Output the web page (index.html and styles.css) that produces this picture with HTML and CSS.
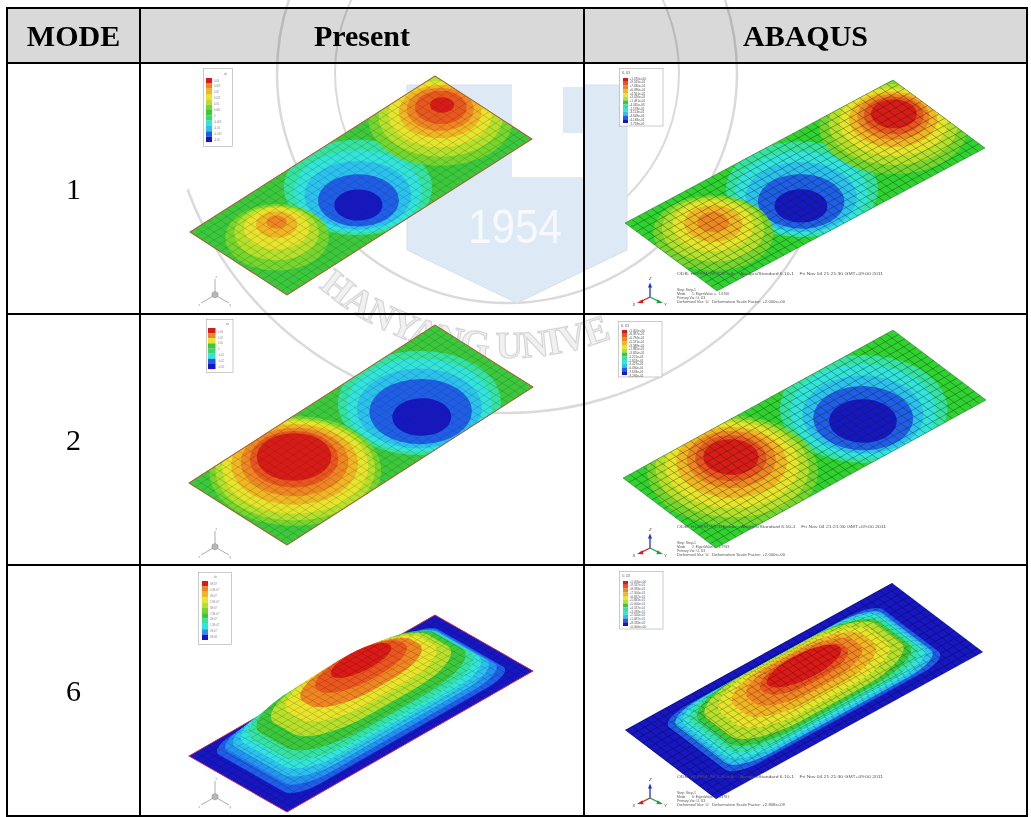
FILE: index.html
```html
<!DOCTYPE html>
<html lang="en">
<head>
<meta charset="utf-8">
<title>Mode shapes: Present vs ABAQUS</title>
<link rel="stylesheet" href="styles.css">
</head>
<body>
<div class="page">
  <div class="sheet">
    <div class="head">MODE</div>
    <div class="head">Present</div>
    <div class="head">ABAQUS</div>

    <!-- ===== MODE 1 ===== -->
    <div class="mode">1</div>
    <div class="plot">
      <svg class="fig" width="442" height="249" viewBox="141 64 442 249">
        <defs>
          <path id="mesh" d="M0 0v16m1-16v16m1-16v16m1-16v16m1-16v16m1-16v16m1-16v16m1-16v16m1-16v16m1-16v16m1-16v16m1-16v16m1-16v16m1-16v16m1-16v16m1-16v16m1-16v16m1-16v16m1-16v16m1-16v16m1-16v16m1-16v16m1-16v16m1-16v16m1-16v16m1-16v16m1-16v16m1-16v16m1-16v16m1-16v16m1-16v16m1-16v16m1-16v16m1-16v16m1-16v16m1-16v16m1-16v16m1-16v16m1-16v16m1-16v16m1-16v16M0 0h40m-40 1h40m-40 1h40m-40 1h40m-40 1h40m-40 1h40m-40 1h40m-40 1h40m-40 1h40m-40 1h40m-40 1h40m-40 1h40m-40 1h40m-40 1h40m-40 1h40m-40 1h40m-40 1h40"/>
          <clipPath id="plateClip"><rect width="40" height="16"/></clipPath>
          <pattern id="gridP" patternUnits="userSpaceOnUse" width="1" height="1"><path class="pat-p" d="M0 0H1M0 0V1"/></pattern>
          <pattern id="gridA" patternUnits="userSpaceOnUse" width="1" height="1"><path class="pat-a" d="M0 0H1M0 0V1"/></pattern>
        </defs>
        <g transform="matrix(6.125 -3.9 6.0625 3.9375 190 232)">
          <rect class="k7" width="40" height="16"/>
          <g clip-path="url(#plateClip)">
            <circle class="k5" cx="19.5" cy="8" r="8.6"/>
            <circle class="k4" cx="19" cy="8.5" r="7.4"/>
            <circle class="k3" cx="18.5" cy="9" r="6.2"/>
            <circle class="k1" cx="17.9" cy="9.7" r="4.7"/>
            <circle class="k0" cx="17.3" cy="10.3" r="2.8"/>
            <circle class="k8" cx="6.5" cy="7.8" r="6"/>
            <circle class="k9" cx="7" cy="7.2" r="4.9"/>
            <circle class="k10" cx="7.6" cy="6.6" r="3.8"/>
            <circle class="k11" cx="8.1" cy="6.1" r="2.4"/>
            <circle class="k12" cx="8.4" cy="5.8" r="1.2"/>
            <circle class="k8" cx="35" cy="6" r="8.4"/>
            <circle class="k9" cx="35.3" cy="5.7" r="7.2"/>
            <circle class="k10" cx="35.6" cy="5.3" r="6"/>
            <circle class="k11" cx="35.9" cy="5" r="4.8"/>
            <circle class="k12" cx="36.2" cy="4.7" r="3.9"/>
            <circle class="k13" cx="36.5" cy="4.5" r="3"/>
            <circle class="k14" cx="36.9" cy="4.3" r="1.4"/>
          </g>
          <use href="#mesh" class="mesh-p"/>
          <rect class="edge-p" width="40" height="16"/>
        </g>
        <g class="legend">
          <rect class="lg-box" x="203.5" y="68.5" width="29" height="78"/>
          <text class="lg-p" x="224" y="74.5">dz</text>
          <rect class="k14" x="206" y="78" width="6" height="5.4"/>
          <rect class="k12" x="206" y="83.33" width="6" height="5.4"/>
          <rect class="k11" x="206" y="88.67" width="6" height="5.4"/>
          <rect class="k10" x="206" y="94" width="6" height="5.4"/>
          <rect class="k9" x="206" y="99.33" width="6" height="5.4"/>
          <rect class="k8" x="206" y="104.67" width="6" height="5.4"/>
          <rect class="k7" x="206" y="110" width="6" height="5.4"/>
          <rect class="k6" x="206" y="115.33" width="6" height="5.4"/>
          <rect class="k4" x="206" y="120.67" width="6" height="5.4"/>
          <rect class="k3" x="206" y="126" width="6" height="5.4"/>
          <rect class="k1" x="206" y="131.33" width="6" height="5.4"/>
          <rect class="k0" x="206" y="136.67" width="6" height="5.4"/>
          <text class="lg-p" x="214" y="81.5">0.03</text>
          <text class="lg-p" x="214" y="87.45">0.025</text>
          <text class="lg-p" x="214" y="93.4">0.02</text>
          <text class="lg-p" x="214" y="99.35">0.015</text>
          <text class="lg-p" x="214" y="105.3">0.01</text>
          <text class="lg-p" x="214" y="111.25">0.005</text>
          <text class="lg-p" x="214" y="117.2">0</text>
          <text class="lg-p" x="214" y="123.15">-0.005</text>
          <text class="lg-p" x="214" y="129.1">-0.01</text>
          <text class="lg-p" x="214" y="135.05">-0.015</text>
          <text class="lg-p" x="214" y="141">-0.02</text>
        </g>
        <g class="triad-p">
          <path class="tp-line" d="M215 295V279M215 295L201 303M215 295L229 303"/>
          <path class="tp-cube" d="M212 293l3-1.5 3 1.5v3.5l-3 1.5-3-1.5z"/>
          <text class="tp-lbl" x="215.5" y="277.5">z</text>
          <text class="tp-lbl" x="198.5" y="306">x</text>
          <text class="tp-lbl" x="229.5" y="306">y</text>
        </g>
      </svg>
    </div>
    <div class="plot">
      <svg class="fig" width="441" height="249" viewBox="585 64 441 249">
        <g transform="matrix(6.7 -3.575 5.75 4.25 625 223)">
          <rect class="ka7" width="40" height="16"/>
          <g clip-path="url(#plateClip)">
            <circle class="k5" cx="19.3" cy="8.3" r="8.6"/>
            <circle class="k4" cx="18.8" cy="8.8" r="7.5"/>
            <circle class="k3" cx="18.3" cy="9.3" r="6.3"/>
            <circle class="k1" cx="17.8" cy="9.9" r="4.9"/>
            <circle class="k0" cx="17.25" cy="10.5" r="3"/>
            <circle class="k8" cx="6.5" cy="7.8" r="6.8"/>
            <circle class="k9" cx="6.9" cy="7.3" r="5.8"/>
            <circle class="k10" cx="7.3" cy="6.8" r="4.6"/>
            <circle class="k11" cx="7.6" cy="6.5" r="3.3"/>
            <circle class="k12" cx="7.75" cy="6.3" r="1.8"/>
            <circle class="k8" cx="34.5" cy="6.5" r="8.4"/>
            <circle class="k9" cx="34.8" cy="6.1" r="7.3"/>
            <circle class="k10" cx="35.1" cy="5.8" r="6.1"/>
            <circle class="k11" cx="35.4" cy="5.4" r="5"/>
            <circle class="k12" cx="35.7" cy="5.1" r="4.1"/>
            <circle class="k13" cx="35.9" cy="4.9" r="3.4"/>
            <circle class="k14" cx="36.1" cy="4.7" r="2.6"/>
          </g>
          <use href="#mesh" class="mesh-a"/>
        </g>
        <g class="legend">
          <rect class="lg-box" x="619.5" y="68.5" width="43.5" height="57.5"/>
          <text class="lg-a" x="622" y="73.5">U, U3</text>
          <rect class="k14" x="623" y="78" width="5" height="3.8"/>
          <rect class="k13" x="623" y="81.75" width="5" height="3.8"/>
          <rect class="k12" x="623" y="85.5" width="5" height="3.8"/>
          <rect class="k11" x="623" y="89.25" width="5" height="3.8"/>
          <rect class="k10" x="623" y="93" width="5" height="3.8"/>
          <rect class="k9" x="623" y="96.75" width="5" height="3.8"/>
          <rect class="k7" x="623" y="100.5" width="5" height="3.8"/>
          <rect class="k5" x="623" y="104.25" width="5" height="3.8"/>
          <rect class="k4" x="623" y="108" width="5" height="3.8"/>
          <rect class="k3" x="623" y="111.75" width="5" height="3.8"/>
          <rect class="k1" x="623" y="115.5" width="5" height="3.8"/>
          <rect class="k0" x="623" y="119.25" width="5" height="3.8"/>
          <text class="lg-a" x="629.5" y="79.6">+1.070e+00</text>
          <text class="lg-a" x="629.5" y="83.35">+9.165e-01</text>
          <text class="lg-a" x="629.5" y="87.1">+7.630e-01</text>
          <text class="lg-a" x="629.5" y="90.85">+6.096e-01</text>
          <text class="lg-a" x="629.5" y="94.6">+4.561e-01</text>
          <text class="lg-a" x="629.5" y="98.35">+3.026e-01</text>
          <text class="lg-a" x="629.5" y="102.1">+1.491e-01</text>
          <text class="lg-a" x="629.5" y="105.85">-4.345e-03</text>
          <text class="lg-a" x="629.5" y="109.6">-1.578e-01</text>
          <text class="lg-a" x="629.5" y="113.35">-3.113e-01</text>
          <text class="lg-a" x="629.5" y="117.1">-4.648e-01</text>
          <text class="lg-a" x="629.5" y="120.85">-6.183e-01</text>
          <text class="lg-a" x="629.5" y="124.6">-7.718e-01</text>
        </g>
        <g class="info">
          <text x="677" y="274.5" textLength="206" lengthAdjust="spacingAndGlyphs">ODB: HLFEM_MODE.odb    Abaqus/Standard 6.10-1    Fri Nov 04 21:21:30 GMT+09:00 2011</text>
          <text x="677" y="290.5">Step: Step-1</text>
          <text x="677" y="294.5">Mode       1: EigenValue =   1.6706</text>
          <text x="677" y="298.5">Primary Var: U, U3</text>
          <text x="677" y="302.5" textLength="108" lengthAdjust="spacingAndGlyphs">Deformed Var: U   Deformation Scale Factor: +2.000e+00</text>
        </g>
        <g class="triad-a">
          <path class="ta-z" d="M650 297V286"/><path class="ta-zh" d="M648 287.5L650 282.5L652 287.5Z"/>
          <path class="ta-x" d="M650 297L641 301.5"/><path class="ta-xh" d="M642.5 299.3L637 303L643.6 303.2Z"/>
          <path class="ta-y" d="M650 297L659 301.5"/><path class="ta-yh" d="M657.5 299.3L663 303L656.4 303.2Z"/>
          <text class="ta-lbl" x="649" y="280">Z</text>
          <text class="ta-lbl" x="632.5" y="305.5">X</text>
          <text class="ta-lbl" x="664" y="306">Y</text>
        </g>
      </svg>
    </div>

    <!-- ===== MODE 2 ===== -->
    <div class="mode">2</div>
    <div class="plot">
      <svg class="fig" width="442" height="249" viewBox="141 315 442 249">
        <g transform="matrix(6.15 -3.95 6.125 3.875 189 483)">
          <rect class="k7" width="40" height="16"/>
          <g clip-path="url(#plateClip)">
            <circle class="k5" cx="28.8" cy="8.7" r="9.4"/>
            <circle class="k4" cx="28.5" cy="9" r="8.4"/>
            <circle class="k3" cx="28.1" cy="9.4" r="7.2"/>
            <circle class="k1" cx="27.8" cy="9.9" r="5.9"/>
            <circle class="k0" cx="27.2" cy="10.7" r="3.4"/>
            <circle class="k8" cx="10.1" cy="7.2" r="9.9"/>
            <circle class="k9" cx="10.3" cy="7" r="9.2"/>
            <circle class="k10" cx="10.6" cy="6.7" r="8.4"/>
            <circle class="k11" cx="10.9" cy="6.3" r="7.3"/>
            <circle class="k12" cx="11.2" cy="6" r="6.2"/>
            <circle class="k13" cx="11.5" cy="5.6" r="5.1"/>
            <circle class="k14" cx="11.8" cy="5.3" r="4.3"/>
          </g>
          <use href="#mesh" class="mesh-p"/>
          <rect class="edge-p" width="40" height="16"/>
        </g>
        <g class="legend">
          <rect class="lg-box" x="206.5" y="319.5" width="26.5" height="53"/>
          <text class="lg-p" x="226" y="325">dz</text>
          <rect class="k14" x="208" y="328" width="7.5" height="5.2"/>
          <rect class="k12" x="208" y="333.13" width="7.5" height="5.2"/>
          <rect class="k10" x="208" y="338.25" width="7.5" height="5.2"/>
          <rect class="k7" x="208" y="343.38" width="7.5" height="5.2"/>
          <rect class="k6" x="208" y="348.5" width="7.5" height="5.2"/>
          <rect class="k4" x="208" y="353.63" width="7.5" height="5.2"/>
          <rect class="k1" x="208" y="358.75" width="7.5" height="5.2"/>
          <rect class="k0" x="208" y="363.88" width="7.5" height="5.2"/>
          <text class="lg-p" x="218" y="332.6">0.03</text>
          <text class="lg-p" x="218" y="338.5">0.02</text>
          <text class="lg-p" x="218" y="344.4">0.01</text>
          <text class="lg-p" x="218" y="350.4">0</text>
          <text class="lg-p" x="218" y="356.3">-0.01</text>
          <text class="lg-p" x="218" y="362.2">-0.02</text>
          <text class="lg-p" x="218" y="368.2">-0.03</text>
        </g>
        <g class="triad-p" transform="translate(0 252)">
          <path class="tp-line" d="M215 295V279M215 295L201 303M215 295L229 303"/>
          <path class="tp-cube" d="M212 293l3-1.5 3 1.5v3.5l-3 1.5-3-1.5z"/>
          <text class="tp-lbl" x="215.5" y="277.5">z</text>
          <text class="tp-lbl" x="198.5" y="306">x</text>
          <text class="tp-lbl" x="229.5" y="306">y</text>
        </g>
      </svg>
    </div>
    <div class="plot">
      <svg class="fig" width="441" height="249" viewBox="585 315 441 249">
        <g transform="matrix(6.75 -3.7 5.8125 4.375 623 478)">
          <rect class="ka7" width="40" height="16"/>
          <g clip-path="url(#plateClip)">
            <circle class="k5" cx="28.5" cy="8.3" r="9.4"/>
            <circle class="k4" cx="28.2" cy="8.6" r="8.2"/>
            <circle class="k3" cx="27.8" cy="9" r="6.8"/>
            <circle class="k1" cx="27.4" cy="9.5" r="5.6"/>
            <circle class="k0" cx="27.06" cy="9.86" r="3.8"/>
            <circle class="k8" cx="10.2" cy="7" r="9.6"/>
            <circle class="k9" cx="10.5" cy="6.6" r="8.6"/>
            <circle class="k10" cx="10.8" cy="6.2" r="7.5"/>
            <circle class="k11" cx="11.1" cy="5.8" r="6.2"/>
            <circle class="k12" cx="11.4" cy="5.4" r="5"/>
            <circle class="k13" cx="11.5" cy="5.2" r="4"/>
            <circle class="k14" cx="11.65" cy="5.05" r="3.1"/>
          </g>
          <use href="#mesh" class="mesh-a"/>
        </g>
        <g class="legend" transform="translate(-1 253)">
          <rect class="lg-box" x="619.5" y="68.5" width="43.5" height="55.5"/>
          <text class="lg-a" x="622" y="73.5">U, U3</text>
          <rect class="k14" x="623" y="77" width="5" height="3.8"/>
          <rect class="k13" x="623" y="80.75" width="5" height="3.8"/>
          <rect class="k12" x="623" y="84.5" width="5" height="3.8"/>
          <rect class="k11" x="623" y="88.25" width="5" height="3.8"/>
          <rect class="k10" x="623" y="92" width="5" height="3.8"/>
          <rect class="k9" x="623" y="95.75" width="5" height="3.8"/>
          <rect class="k7" x="623" y="99.5" width="5" height="3.8"/>
          <rect class="k5" x="623" y="103.25" width="5" height="3.8"/>
          <rect class="k4" x="623" y="107" width="5" height="3.8"/>
          <rect class="k3" x="623" y="110.75" width="5" height="3.8"/>
          <rect class="k1" x="623" y="114.5" width="5" height="3.8"/>
          <rect class="k0" x="623" y="118.25" width="5" height="3.8"/>
          <text class="lg-a" x="629.5" y="78.6">+1.000e+00</text>
          <text class="lg-a" x="629.5" y="82.35">+8.397e-01</text>
          <text class="lg-a" x="629.5" y="86.1">+6.794e-01</text>
          <text class="lg-a" x="629.5" y="89.85">+5.191e-01</text>
          <text class="lg-a" x="629.5" y="93.6">+3.588e-01</text>
          <text class="lg-a" x="629.5" y="97.35">+1.985e-01</text>
          <text class="lg-a" x="629.5" y="101.1">+3.820e-02</text>
          <text class="lg-a" x="629.5" y="104.85">-1.221e-01</text>
          <text class="lg-a" x="629.5" y="108.6">-2.824e-01</text>
          <text class="lg-a" x="629.5" y="112.35">-4.427e-01</text>
          <text class="lg-a" x="629.5" y="116.1">-6.030e-01</text>
          <text class="lg-a" x="629.5" y="119.85">-7.633e-01</text>
          <text class="lg-a" x="629.5" y="123.6">-9.236e-01</text>
        </g>
        <g class="info" transform="translate(0 253)">
          <text x="677" y="274.5" textLength="209" lengthAdjust="spacingAndGlyphs">ODB: HLFEM_MODE.odb    Abaqus/Standard 6.10-1    Fri Nov 04 21:21:30 GMT+09:00 2011</text>
          <text x="677" y="290.5">Step: Step-1</text>
          <text x="677" y="294.5">Mode       2: EigenValue =   1.7933</text>
          <text x="677" y="298.5">Primary Var: U, U3</text>
          <text x="677" y="302.5" textLength="108" lengthAdjust="spacingAndGlyphs">Deformed Var: U   Deformation Scale Factor: +2.000e+00</text>
        </g>
        <g class="triad-a" transform="translate(0 251)">
          <path class="ta-z" d="M650 297V286"/><path class="ta-zh" d="M648 287.5L650 282.5L652 287.5Z"/>
          <path class="ta-x" d="M650 297L641 301.5"/><path class="ta-xh" d="M642.5 299.3L637 303L643.6 303.2Z"/>
          <path class="ta-y" d="M650 297L659 301.5"/><path class="ta-yh" d="M657.5 299.3L663 303L656.4 303.2Z"/>
          <text class="ta-lbl" x="649" y="280">Z</text>
          <text class="ta-lbl" x="632.5" y="305.5">X</text>
          <text class="ta-lbl" x="664" y="306">Y</text>
        </g>
      </svg>
    </div>

    <!-- ===== MODE 6 ===== -->
    <div class="mode">6</div>
    <div class="plot">
      <svg class="fig" width="442" height="249" viewBox="141 566 442 249">
        <g transform="matrix(6.15 -3.525 6.125 3.5 189 756)">
          <rect class="k0" width="40" height="16"/>
          <rect class="gp" width="40" height="16"/>
          <rect class="edge-m" width="40" height="16"/>
        </g>
        <g transform="translate(0 -3) matrix(6.15 -3.525 6.125 3.5 189 756)"><rect class="k1" x="2.2" y=".9" width="35.6" height="14.2" rx="4.45" ry="1.78"/><rect class="gp" x="2.2" y=".9" width="35.6" height="14.2" rx="4.45" ry="1.78"/></g>
        <g transform="translate(0 -6.5) matrix(6.15 -3.525 6.125 3.5 189 756)"><rect class="k2" x="2.9" y="1.2" width="34.2" height="13.6" rx="5.56" ry="2.21"/><rect class="gp" x="2.9" y="1.2" width="34.2" height="13.6" rx="5.56" ry="2.21"/></g>
        <g transform="translate(0 -10) matrix(6.15 -3.525 6.125 3.5 189 756)"><rect class="k3" x="3.6" y="1.45" width="32.8" height="13.1" rx="6.56" ry="2.62"/><rect class="gp" x="3.6" y="1.45" width="32.8" height="13.1" rx="6.56" ry="2.62"/></g>
        <g transform="translate(0 -14) matrix(6.15 -3.525 6.125 3.5 189 756)"><rect class="k4" x="4.3" y="1.7" width="31.4" height="12.6" rx="7.46" ry="2.99"/><rect class="gp" x="4.3" y="1.7" width="31.4" height="12.6" rx="7.46" ry="2.99"/></g>
        <g transform="translate(0 -18) matrix(6.15 -3.525 6.125 3.5 189 756)"><rect class="k5" x="5" y="2" width="30" height="12" rx="8.25" ry="3.3"/><rect class="gp" x="5" y="2" width="30" height="12" rx="8.25" ry="3.3"/></g>
        <g transform="translate(0 -23) matrix(6.15 -3.525 6.125 3.5 189 756)"><rect class="k7" x="5.8" y="2.3" width="28.4" height="11.4" rx="8.88" ry="3.56"/><rect class="gp" x="5.8" y="2.3" width="28.4" height="11.4" rx="8.88" ry="3.56"/></g>
        <g transform="translate(0 -29) matrix(6.15 -3.525 6.125 3.5 189 756)"><rect class="k9" x="7.5" y="3" width="25" height="10" rx="8.75" ry="3.5"/><rect class="gp" x="7.5" y="3" width="25" height="10" rx="8.75" ry="3.5"/></g>
        <g transform="translate(0 -35) matrix(6.15 -3.525 6.125 3.5 189 756)"><rect class="k10" x="9.3" y="3.7" width="21.4" height="8.6" rx="8.29" ry="3.33"/><rect class="gp" x="9.3" y="3.7" width="21.4" height="8.6" rx="8.29" ry="3.33"/></g>
        <g transform="translate(0 -41) matrix(6.15 -3.525 6.125 3.5 189 756)"><rect class="k12" x="11.2" y="4.5" width="17.6" height="7" rx="7.48" ry="2.98"/><rect class="gp" x="11.2" y="4.5" width="17.6" height="7" rx="7.48" ry="2.98"/></g>
        <g transform="translate(0 -47) matrix(6.15 -3.525 6.125 3.5 189 756)"><rect class="k13" x="13.2" y="5.3" width="13.6" height="5.4" rx="6.29" ry="2.5"/><rect class="gp" x="13.2" y="5.3" width="13.6" height="5.4" rx="6.29" ry="2.5"/></g>
        <g transform="translate(0 -53) matrix(6.15 -3.525 6.125 3.5 189 756)"><ellipse class="k14" cx="20" cy="8" rx="4.6" ry="1.8"/><ellipse class="gp" cx="20" cy="8" rx="4.6" ry="1.8"/></g>
        <g class="legend">
          <rect class="lg-box" x="198.5" y="572.5" width="33" height="72"/>
          <text class="lg-p" x="214" y="577.5">dz</text>
          <rect class="k14" x="202" y="581" width="6" height="5.4"/>
          <rect class="k12" x="202" y="586.36" width="6" height="5.4"/>
          <rect class="k11" x="202" y="591.72" width="6" height="5.4"/>
          <rect class="k10" x="202" y="597.08" width="6" height="5.4"/>
          <rect class="k9" x="202" y="602.44" width="6" height="5.4"/>
          <rect class="k8" x="202" y="607.8" width="6" height="5.4"/>
          <rect class="k7" x="202" y="613.16" width="6" height="5.4"/>
          <rect class="k5" x="202" y="618.52" width="6" height="5.4"/>
          <rect class="k4" x="202" y="623.88" width="6" height="5.4"/>
          <rect class="k2" x="202" y="629.24" width="6" height="5.4"/>
          <rect class="k0" x="202" y="634.6" width="6" height="5.4"/>
          <text class="lg-p" x="210" y="585">5E-07</text>
          <text class="lg-p" x="210" y="590.9">4.5E-07</text>
          <text class="lg-p" x="210" y="596.8">4E-07</text>
          <text class="lg-p" x="210" y="602.7">3.5E-07</text>
          <text class="lg-p" x="210" y="608.6">3E-07</text>
          <text class="lg-p" x="210" y="614.5">2.5E-07</text>
          <text class="lg-p" x="210" y="620.4">2E-07</text>
          <text class="lg-p" x="210" y="626.3">1.5E-07</text>
          <text class="lg-p" x="210" y="632.2">1E-07</text>
          <text class="lg-p" x="210" y="638.1">5E-08</text>
        </g>
        <g class="triad-p" transform="translate(0 502)">
          <path class="tp-line" d="M215 295V279M215 295L201 303M215 295L229 303"/>
          <path class="tp-cube" d="M212 293l3-1.5 3 1.5v3.5l-3 1.5-3-1.5z"/>
          <text class="tp-lbl" x="215.5" y="277.5">z</text>
          <text class="tp-lbl" x="198.5" y="306">x</text>
          <text class="tp-lbl" x="229.5" y="306">y</text>
        </g>
      </svg>
    </div>
    <div class="plot">
      <svg class="fig" width="441" height="249" viewBox="585 566 441 249">
        <g transform="matrix(6.675 -3.675 5.6875 4.3125 625 730)">
          <rect class="k0" width="40" height="16"/>
          <rect class="ga" width="40" height="16"/>
        </g>
        <g transform="translate(0 -1.4) matrix(6.675 -3.675 5.6875 4.3125 625 730) translate(2 .64) scale(.9 .92)"><rect class="k1" x="2.2" y=".9" width="35.6" height="14.2" rx="4.45" ry="1.78"/><rect class="ga" x="2.2" y=".9" width="35.6" height="14.2" rx="4.45" ry="1.78"/></g>
        <g transform="translate(0 -3) matrix(6.675 -3.675 5.6875 4.3125 625 730) translate(2 .64) scale(.9 .92)"><rect class="k3" x="2.9" y="1.2" width="34.2" height="13.6" rx="5.56" ry="2.21"/><rect class="ga" x="2.9" y="1.2" width="34.2" height="13.6" rx="5.56" ry="2.21"/></g>
        <g transform="translate(0 -4.7) matrix(6.675 -3.675 5.6875 4.3125 625 730) translate(2 .64) scale(.9 .92)"><rect class="k4" x="3.6" y="1.45" width="32.8" height="13.1" rx="6.56" ry="2.62"/><rect class="ga" x="3.6" y="1.45" width="32.8" height="13.1" rx="6.56" ry="2.62"/></g>
        <g transform="translate(0 -6.6) matrix(6.675 -3.675 5.6875 4.3125 625 730) translate(2 .64) scale(.9 .92)"><rect class="k5" x="4.3" y="1.7" width="31.4" height="12.6" rx="7.46" ry="2.99"/><rect class="ga" x="4.3" y="1.7" width="31.4" height="12.6" rx="7.46" ry="2.99"/></g>
        <g transform="translate(0 -8.5) matrix(6.675 -3.675 5.6875 4.3125 625 730) translate(2 .64) scale(.9 .92)"><rect class="k7" x="5" y="2" width="30" height="12" rx="8.25" ry="3.3"/><rect class="ga" x="5" y="2" width="30" height="12" rx="8.25" ry="3.3"/></g>
        <g transform="translate(0 -10.8) matrix(6.675 -3.675 5.6875 4.3125 625 730) translate(2 .64) scale(.9 .92)"><rect class="k9" x="5.8" y="2.3" width="28.4" height="11.4" rx="8.88" ry="3.56"/><rect class="ga" x="5.8" y="2.3" width="28.4" height="11.4" rx="8.88" ry="3.56"/></g>
        <g transform="translate(0 -13.6) matrix(6.675 -3.675 5.6875 4.3125 625 730) translate(2 .64) scale(.9 .92)"><rect class="k10" x="7.5" y="3" width="25" height="10" rx="8.75" ry="3.5"/><rect class="ga" x="7.5" y="3" width="25" height="10" rx="8.75" ry="3.5"/></g>
        <g transform="translate(0 -16.5) matrix(6.675 -3.675 5.6875 4.3125 625 730) translate(2 .64) scale(.9 .92)"><rect class="k11" x="9.3" y="3.7" width="21.4" height="8.6" rx="8.29" ry="3.33"/><rect class="ga" x="9.3" y="3.7" width="21.4" height="8.6" rx="8.29" ry="3.33"/></g>
        <g transform="translate(0 -19.3) matrix(6.675 -3.675 5.6875 4.3125 625 730) translate(2 .64) scale(.9 .92)"><rect class="k12" x="11.2" y="4.5" width="17.6" height="7" rx="7.48" ry="2.98"/><rect class="ga" x="11.2" y="4.5" width="17.6" height="7" rx="7.48" ry="2.98"/></g>
        <g transform="translate(0 -22) matrix(6.675 -3.675 5.6875 4.3125 625 730) translate(2 .64) scale(.9 .92)"><rect class="k13" x="13.2" y="5.3" width="13.6" height="5.4" rx="6.29" ry="2.5"/><rect class="ga" x="13.2" y="5.3" width="13.6" height="5.4" rx="6.29" ry="2.5"/></g>
        <g transform="translate(0 -24.9) matrix(6.675 -3.675 5.6875 4.3125 625 730) translate(2 .64) scale(.9 .92)"><ellipse class="k14" cx="20" cy="8" rx="5.9" ry="2.2"/><ellipse class="ga" cx="20" cy="8" rx="5.9" ry="2.2"/></g>
        <g class="legend" transform="translate(0 503)">
          <rect class="lg-box" x="619.5" y="68.5" width="43.5" height="57.5"/>
          <text class="lg-a" x="622" y="73.5">U, U3</text>
          <rect class="k14" x="623" y="78" width="5" height="3.8"/>
          <rect class="k13" x="623" y="81.75" width="5" height="3.8"/>
          <rect class="k12" x="623" y="85.5" width="5" height="3.8"/>
          <rect class="k11" x="623" y="89.25" width="5" height="3.8"/>
          <rect class="k10" x="623" y="93" width="5" height="3.8"/>
          <rect class="k9" x="623" y="96.75" width="5" height="3.8"/>
          <rect class="k7" x="623" y="100.5" width="5" height="3.8"/>
          <rect class="k5" x="623" y="104.25" width="5" height="3.8"/>
          <rect class="k4" x="623" y="108" width="5" height="3.8"/>
          <rect class="k3" x="623" y="111.75" width="5" height="3.8"/>
          <rect class="k1" x="623" y="115.5" width="5" height="3.8"/>
          <rect class="k0" x="623" y="119.25" width="5" height="3.8"/>
          <text class="lg-a" x="629.5" y="79.6">+1.000e+00</text>
          <text class="lg-a" x="629.5" y="83.35">+9.167e-01</text>
          <text class="lg-a" x="629.5" y="87.1">+8.333e-01</text>
          <text class="lg-a" x="629.5" y="90.85">+7.500e-01</text>
          <text class="lg-a" x="629.5" y="94.6">+6.667e-01</text>
          <text class="lg-a" x="629.5" y="98.35">+5.833e-01</text>
          <text class="lg-a" x="629.5" y="102.1">+5.000e-01</text>
          <text class="lg-a" x="629.5" y="105.85">+4.167e-01</text>
          <text class="lg-a" x="629.5" y="109.6">+3.333e-01</text>
          <text class="lg-a" x="629.5" y="113.35">+2.500e-01</text>
          <text class="lg-a" x="629.5" y="117.1">+1.667e-01</text>
          <text class="lg-a" x="629.5" y="120.85">+8.333e-02</text>
          <text class="lg-a" x="629.5" y="124.6">+0.000e+00</text>
        </g>
        <g class="info" transform="translate(0 503.5)">
          <text x="677" y="274.5" textLength="206" lengthAdjust="spacingAndGlyphs">ODB: HLFEM_MODE.odb    Abaqus/Standard 6.10-1    Fri Nov 04 21:21:30 GMT+09:00 2011</text>
          <text x="677" y="290.5">Step: Step-1</text>
          <text x="677" y="294.5">Mode       6: EigenValue =   3.4781</text>
          <text x="677" y="298.5">Primary Var: U, U3</text>
          <text x="677" y="302.5" textLength="108" lengthAdjust="spacingAndGlyphs">Deformed Var: U   Deformation Scale Factor: +2.808e+09</text>
        </g>
        <g class="triad-a" transform="translate(0 501)">
          <path class="ta-z" d="M650 297V286"/><path class="ta-zh" d="M648 287.5L650 282.5L652 287.5Z"/>
          <path class="ta-x" d="M650 297L641 301.5"/><path class="ta-xh" d="M642.5 299.3L637 303L643.6 303.2Z"/>
          <path class="ta-y" d="M650 297L659 301.5"/><path class="ta-yh" d="M657.5 299.3L663 303L656.4 303.2Z"/>
          <text class="ta-lbl" x="649" y="280">Z</text>
          <text class="ta-lbl" x="632.5" y="305.5">X</text>
          <text class="ta-lbl" x="664" y="306">Y</text>
        </g>
      </svg>
    </div>
  </div>

  <svg class="watermark" width="1031" height="817" viewBox="0 0 1031 817" aria-hidden="true">
    <path class="wm-line" d="M187.5 189.3A340 340 0 0 0 826.5 189.3"/>
    <circle class="wm-line" cx="507" cy="73" r="230"/>
    <circle class="wm-line wm-thin" cx="507" cy="73" r="172"/>
    <path class="wm-shield" d="M407 85H627V250L517 303L407 250Z"/>
    <path class="wm-cut" d="M512 64H583V87H563V133H583V177H512Z"/>
    <text class="wm-year" x="468" y="243" textLength="94" lengthAdjust="spacingAndGlyphs">1954</text>
    <path id="ringPath" class="wm-none" d="M222 73A285 285 0 0 0 792 73"/>
    <text class="wm-ring"><textPath href="#ringPath" startOffset="242">HANYANG UNIVE</textPath></text>
  </svg>
</div>
</body>
</html>
```

FILE: styles.css
```css
* { box-sizing: border-box; }
html, body { margin: 0; padding: 0; background: #fff; }

.page { position: relative; width: 1031px; height: 817px; overflow: hidden; }

.sheet {
  display: grid;
  grid-template-columns: 131px 442px 441px;
  grid-template-rows: 53px 249px 249px 249px;
  gap: 2px;
  padding: 2px;
  margin: 7px 0 0 6px;
  width: max-content;
  background: #000;
}

.head {
  display: flex;
  align-items: center;
  justify-content: center;
  background: #d9d9d9;
  color: #000;
  font: bold 30px "Liberation Serif", "Times New Roman", serif;
}

.mode {
  display: flex;
  align-items: center;
  justify-content: center;
  background: #fff;
  color: #000;
  font: 30px "Liberation Serif", "Times New Roman", serif;
}

.plot { background: #fff; }
.fig { display: block; position: relative; z-index: 2; }

/* contour palette */
.k0 { fill: #1616c2; }
.k1 { fill: #1f5ee8; }
.k2 { fill: #2494f2; }
.k3 { fill: #2cc2f0; }
.k4 { fill: #33e4dc; }
.k5 { fill: #36e2a2; }
.k6 { fill: #3ad86a; }
.k7 { fill: #3cc83c; }
.ka7 { fill: #30d230; }
.k8 { fill: #76d62e; }
.k9 { fill: #b6e02c; }
.k10 { fill: #e8e42c; }
.k11 { fill: #f2b624; }
.k12 { fill: #f08622; }
.k13 { fill: #ea561e; }
.k14 { fill: #da1a16; }

.mesh-p { fill: none; stroke: #1c3a1c; stroke-opacity: .32; stroke-width: .075; }
.mesh-a { fill: none; stroke: #0e2a0e; stroke-opacity: .55; stroke-width: .08; }
.pat-p { fill: none; stroke: #000; stroke-opacity: .3; stroke-width: .15; }
.pat-a { fill: none; stroke: #000; stroke-opacity: .45; stroke-width: .16; }
.gp { fill: url(#gridP); }
.ga { fill: url(#gridA); }
.edge-p { fill: none; stroke: #b4552a; stroke-width: .14; }
.edge-m { fill: none; stroke: #c42a5a; stroke-width: .14; }

/* legends */
.lg-box { fill: #fff; stroke: #a8a8a8; stroke-width: .6; }
.lg-p { font-family: "Liberation Sans", Arial, sans-serif; font-size: 2.6px; fill: #808080; }
.lg-a { font-family: "Liberation Sans", Arial, sans-serif; font-size: 3.1px; fill: #505050; }

.info text { font-family: "Liberation Sans", Arial, sans-serif; font-size: 3.4px; fill: #555; white-space: pre; }

/* axis triads */
.tp-line { fill: none; stroke: #8a8a8a; stroke-width: .7; }
.tp-cube { fill: #b8b8b8; stroke: #707070; stroke-width: .4; }
.tp-lbl { font-family: "Liberation Sans", Arial, sans-serif; font-size: 3px; fill: #888; }
.ta-z { stroke: #1c30d8; stroke-width: 1.3; }
.ta-zh { fill: #1c30d8; }
.ta-x { stroke: #d42020; stroke-width: 1.3; }
.ta-xh { fill: #d42020; }
.ta-y { stroke: #20a048; stroke-width: 1.3; }
.ta-yh { fill: #20a048; }
.ta-lbl { font-family: "Liberation Sans", Arial, sans-serif; font-style: italic; font-size: 4px; fill: #333; }

/* watermark seal */
.watermark {
  position: absolute;
  left: 0;
  top: 0;
  z-index: 1;
  pointer-events: none;
  mix-blend-mode: multiply;
}
.wm-line { fill: none; stroke: #dadada; stroke-width: 2.5; }
.wm-thin { stroke-width: 2; }
.wm-shield { fill: #dde9f5; stroke: #d4e0ee; stroke-width: 1; }
.wm-cut { fill: #fff; }
.wm-year { font-family: "Liberation Sans", Arial, sans-serif; font-size: 48px; fill: #f6f9fd; }
.wm-none { fill: none; }
.wm-ring {
  font-family: "Liberation Serif", "Times New Roman", serif;
  font-weight: bold;
  font-size: 38px;
  letter-spacing: -1px;
  fill: #f1f1f1;
  stroke: #d6d6d6;
  stroke-width: 1.2;
}
```
